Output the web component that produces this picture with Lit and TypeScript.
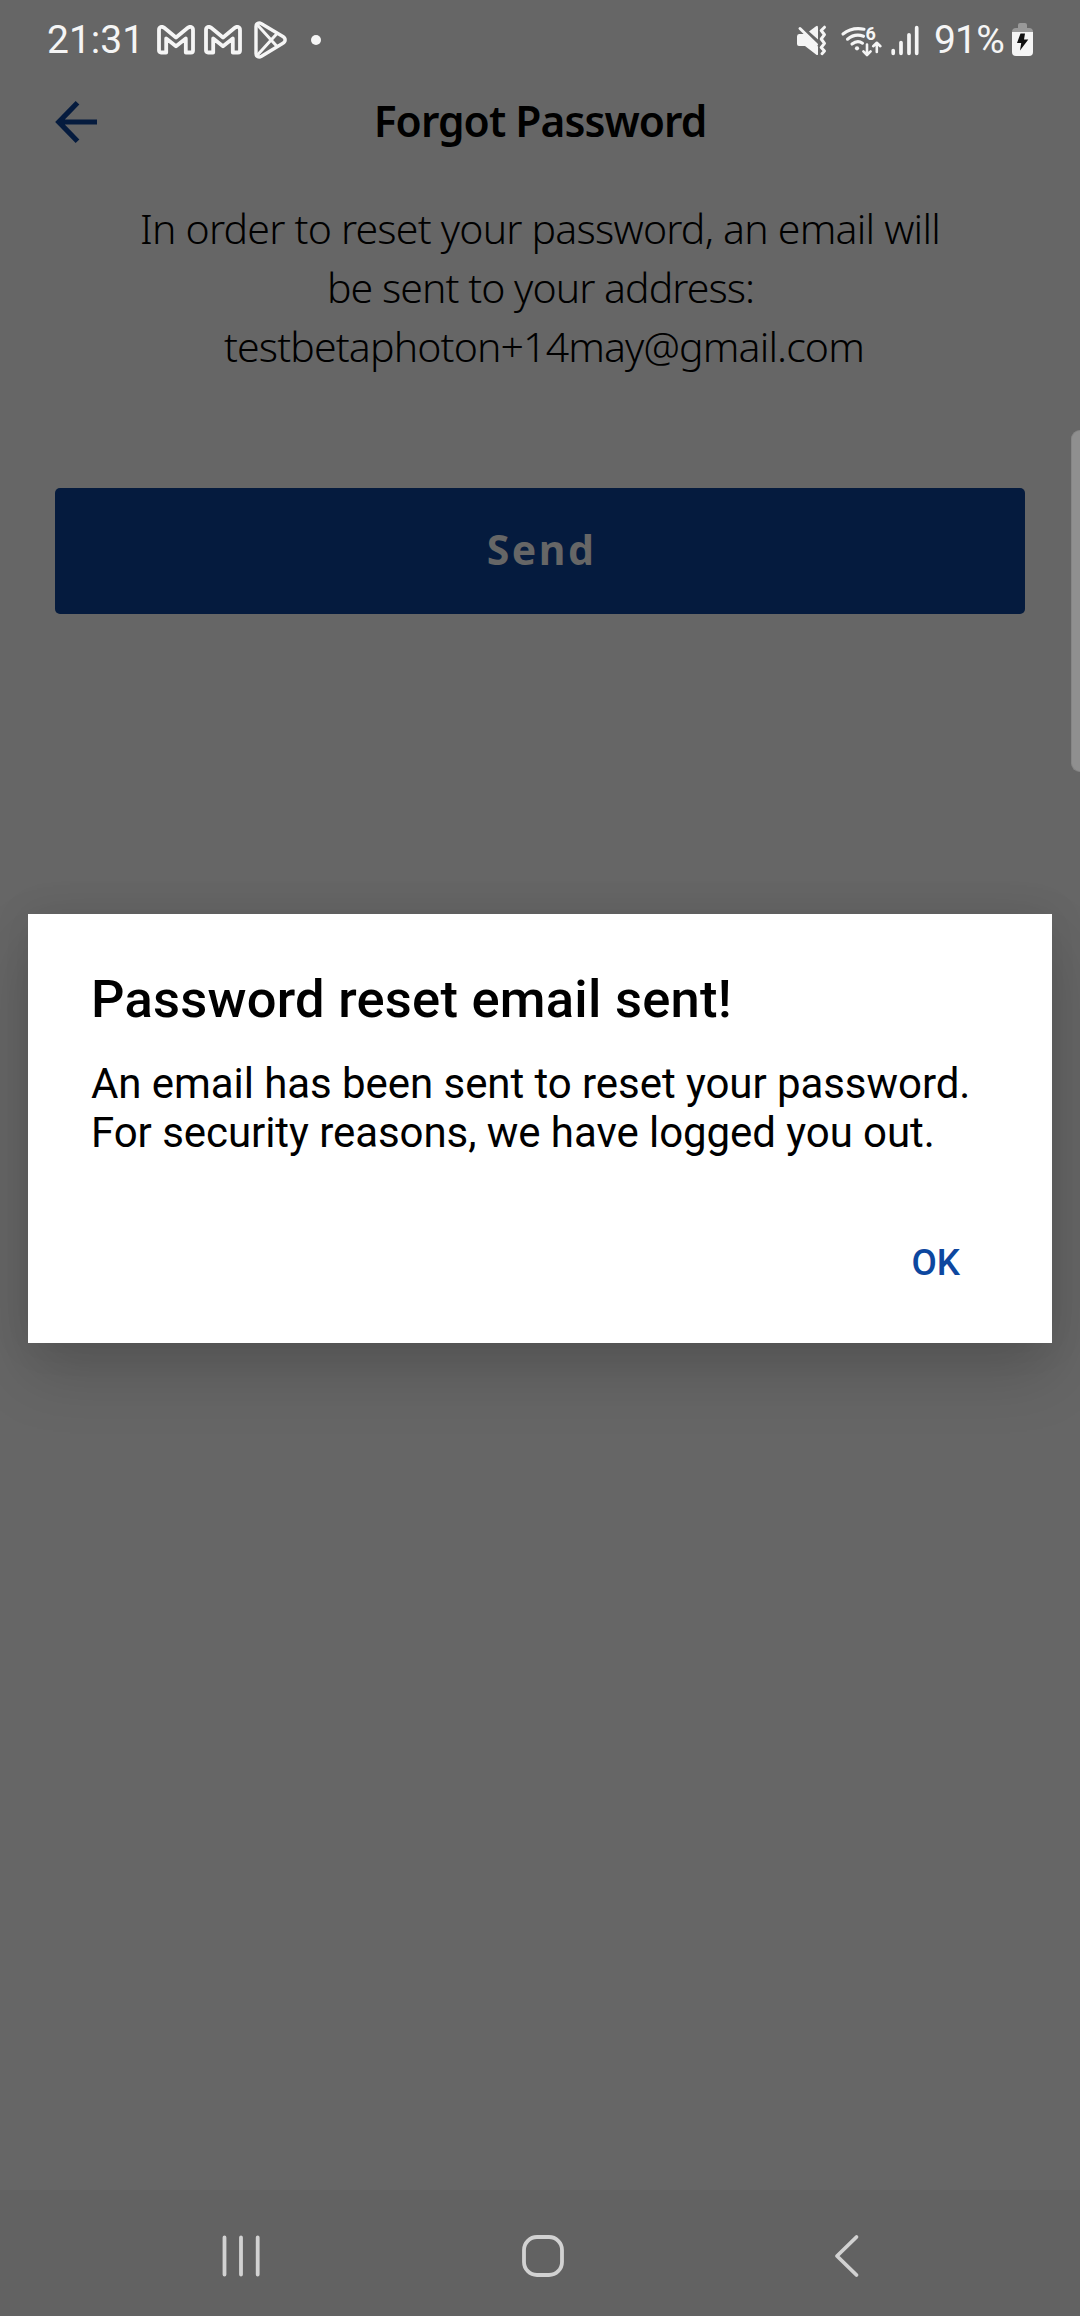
import { LitElement, html, css } from "lit";
import { customElement, property } from "lit/decorators.js";

@customElement("status-bar")
class StatusBar extends LitElement {
  static styles = css`
    :host { display: flex; align-items: center; height: 78px; box-sizing: border-box;
      padding: 1px 47px 0 47px; font: 400 39px/46px Roboto, sans-serif; color: #f5f5f5; }
    svg { display: block; flex: none; }
    .time { width: 110px; white-space: nowrap; }
    .mail { margin-right: 9px; }
    .play { margin-left: 2px; }
    .dot { width: 10px; height: 10px; border-radius: 50%; background: #f5f5f5; margin-left: 22px; }
    .spacer { flex: 1; }
    .pct { width: 78px; white-space: nowrap; letter-spacing: -0.8px; }
    .radios { margin-right: -3px; }
    .six { font: 700 18px Roboto, sans-serif; fill: #f5f5f5; }
  `;
  private mail() {
    return html`<svg class="mail" width="38" height="30" viewBox="0 0 38 30" fill="none" stroke="#f5f5f5" stroke-width="3.8" stroke-linejoin="round">
      <path d="M2 5C2 1.8 5 1 7.2 2.8L19 12.5 30.8 2.8C33 1 36 1.8 36 5V25.5Q36 27.5 34 27.5H28.8V13.5L19 21.2 9.2 13.5V27.5H4Q2 27.5 2 25.5Z"/></svg>`;
  }
  render() {
    return html`
      <span class="time">21:31</span>
      ${this.mail()}${this.mail()}
      <svg class="play" width="36" height="40" viewBox="0 0 36 40" fill="none" stroke="#f5f5f5" stroke-width="3.4" stroke-linejoin="round">
        <path d="M3 6.5C3 3 6 2.3 8.5 3.7L29.5 16.3C33 18.3 33 21.5 29.5 23.5L8.5 36.3C6 37.7 3 37 3 33.5Z"/>
        <path d="M4 4.5 24.3 26.8M4 35.5 24.3 13.2" stroke-width="3"/></svg>
      <span class="dot"></span>
      <span class="spacer"></span>
      <svg class="radios" width="142" height="40" viewBox="795 19 142 40" fill="none" stroke="#f5f5f5" stroke-linecap="round" stroke-linejoin="round">
        <g fill="#f5f5f5" stroke="none">
          <path d="M799 33H805L818 45.5V53.5Q817.5 54.5 816 53.5L805 45H799Q797 45 797 43V35.5Q797 33 799 33Z"/>
          <path d="M809 30.5 816 25.2Q818 24 818 26.5V38.5Z"/>
        </g>
        <path d="M800 27.5 816.5 43.5" stroke-width="3"/>
        <path d="M824.5 26.2 821.2 29.5 824.5 33.7 821.2 38 824.5 42.4 821.2 46.5 824.5 50 822 52.7" stroke-width="3"/>
        <path d="M843 33Q852 25.8 864 28.2M847.5 38.2Q855 32 863.5 35.3M852 43Q857.5 38.8 862.5 42.2" stroke-width="3.1"/>
        <circle cx="857" cy="47.3" r="2.1" fill="#f5f5f5" stroke="none"/>
        <text class="six" x="865.6" y="38.7" stroke="none">6</text>
        <path d="M867 43.5V53.3M863.4 50.4 867 54 870.6 50.4M876.8 51V42.2M873.2 45.2 876.8 41.8 880.4 45.2" stroke-width="2.6"/>
        <path d="M893.2 49.5V52.3M901 41.5V52.3M909 33.8V52.3M916.7 26.7V52.3" stroke-width="3.7"/>
      </svg>
      <span class="pct">91%</span>
      <svg width="21" height="34" viewBox="0 0 21 34">
        <path d="M6 5V2Q6 0 8 0H13Q15 0 15 2V5H17Q21 5 21 9V12H0V9Q0 5 4 5Z" fill="#999"/>
        <path d="M0 9H21V29Q21 33 17 33H4Q0 33 0 29Z" fill="#f5f5f5"/>
        <path d="M8.5 10.5H13L12 16.5H16.3L8 27.5 9.2 20H5Z" fill="#111"/></svg>`;
  }
}

@customElement("page-header")
class PageHeader extends LitElement {
  @property() heading = "";
  static styles = css`
    :host { display: grid; grid-template-columns: 60px 1fr 60px; align-items: center; height: 88px; padding: 0 47px; }
    svg { display: block; margin-left: 7px; }
    .heading { text-align: center; font: 600 42.5px/60px "Noto Sans", sans-serif; color: #000; padding-bottom: 2px; white-space: nowrap; letter-spacing: -0.95px; }
  `;
  render() {
    return html`<svg width="44" height="44" viewBox="0 0 44 44" fill="none" stroke="#051b3e" stroke-width="5.2">
      <path d="M43 22H6M23.5 2.8 4.8 22 23.5 41.2"/></svg>
      <span class="heading">${this.heading}</span>`;
  }
}

@customElement("alert-dialog")
class AlertDialog extends LitElement {
  static styles = css`
    :host { display: flex; flex-direction: column; box-sizing: border-box; width: 1024px; height: 429px;
      padding: 54px 63px 0; background: #fff; font-family: Roboto, sans-serif; color: #000;
      box-shadow: 0 30px 60px rgba(0,0,0,.16), 0 0 38px rgba(0,0,0,.08); }
    .title { font-size: 52.5px; line-height: 62px; font-weight: 500; white-space: nowrap; letter-spacing: 0.24px; }
    .text { margin-top: 29px; font-size: 42px; line-height: 49px; white-space: nowrap; letter-spacing: -0.06px; }
    .ok { align-self: flex-end; margin: 81px 29px 0 0; font-size: 36.75px; line-height: 50px; font-weight: 500; color: #0d479f; }
  `;
  render() {
    return html`<div class="title">Password reset email sent!</div>
      <div class="text">An email has been sent to reset your password.<br>For security reasons, we have logged you out.</div>
      <div class="ok">OK</div>`;
  }
}

@customElement("nav-bar")
class NavBar extends LitElement {
  static styles = css`
    :host { display: flex; justify-content: space-between; align-items: center; height: 126px; box-sizing: border-box;
      padding: 6px 214px 0 216px; background: #626262; }
    svg { display: block; fill: none; stroke: #d2d2d2; stroke-width: 3.8; stroke-linecap: round; stroke-linejoin: round; }
  `;
  render() {
    return html`
      <svg width="50" height="50" viewBox="0 0 50 50"><path d="M8.5 6.5V43.5M25 6.5V43.5M41.7 6.5V43.5"/></svg>
      <svg width="50" height="50" viewBox="0 0 50 50"><rect x="8" y="6" width="38" height="38" rx="13"/></svg>
      <svg width="50" height="50" viewBox="0 0 50 50"><path d="M40.5 6 21 25 40.5 44"/></svg>`;
  }
}

@customElement("app-root")
class AppRoot extends LitElement {
  static styles = css`
    :host { display: flex; flex-direction: column; position: relative; width: 1080px; height: 2316px; overflow: hidden; background: #666; }
    .message { margin-top: 33px; text-align: center; font: 300 41px/59px "Noto Sans", sans-serif; color: #000; white-space: nowrap; }
    .line { display: block; letter-spacing: -0.77px; }
    .short { letter-spacing: -0.94px; padding-left: 1px; }
    .address { letter-spacing: -0.86px; padding-left: 8px; }
    .send { display: flex; align-items: center; justify-content: center; box-sizing: border-box; height: 126px;
      margin: 112px 55px 0; padding: 0 0 4px 3px; border-radius: 5px; background: #051b3e; color: #666;
      font: 700 41px/60px "Noto Sans", sans-serif; letter-spacing: 2.5px; }
    .fill { flex: 1; }
    .edge { position: absolute; right: 0; top: 430px; width: 9px; height: 342px; box-sizing: border-box;
      background: #8f8f8f; border: 1px solid #858585; border-right: 0; border-radius: 9px 0 0 9px; }
    .dialog { position: absolute; left: 28px; top: 914px; }
  `;
  render() {
    return html`
      <status-bar></status-bar>
      <page-header heading="Forgot Password"></page-header>
      <div class="message">
        <span class="line">In order to reset your password, an email will</span>
        <span class="line short">be sent to your address:</span>
        <span class="line address">testbetaphoton+14may@gmail.com</span>
      </div>
      <div class="send">Send</div>
      <div class="fill"></div>
      <nav-bar></nav-bar>
      <div class="edge"></div>
      <alert-dialog class="dialog"></alert-dialog>`;
  }
}
